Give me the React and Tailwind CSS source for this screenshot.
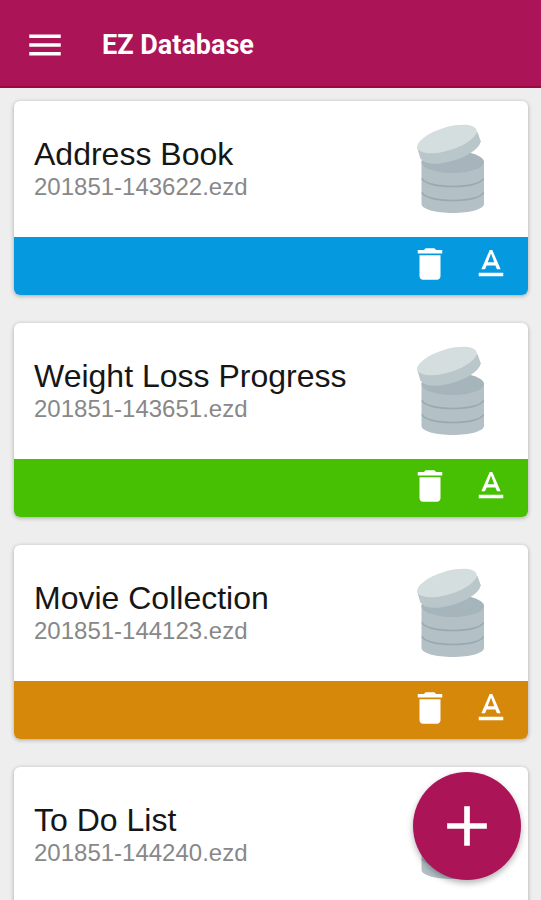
import React from 'react';
import { MdMenu, MdDelete, MdTextFormat, MdAdd } from 'react-icons/md';

const databases = [
  { name: 'Address Book', file: '201851-143622.ezd', color: 'bg-[#0599e0]' },
  { name: 'Weight Loss Progress', file: '201851-143651.ezd', color: 'bg-[#47c004]' },
  { name: 'Movie Collection', file: '201851-144123.ezd', color: 'bg-[#d6880a]' },
  { name: 'To Do List', file: '201851-144240.ezd', color: 'bg-[#8e24aa]' },
];

const DatabaseIcon = () => (
  <svg className="w-20 h-[100px] shrink-0 mt-0.5" viewBox="0 0 80 100" aria-hidden="true">
    {/* stack of discs */}
    <path d="M9.5 41v43c0 5 14 9 31.25 9S72 89 72 84V41z" fill="#b3c1c6" />
    <ellipse cx="40.75" cy="42" rx="31.25" ry="11" fill="#a5b5bb" />
    <path d="M10 58.500c2 5 15 8 30.750 8s28.750-3 30.750-8" fill="none" stroke="#98a9b1" strokeWidth="1.600" />
    <path d="M10 72.500c2 5 15 8 30.750 8s28.750-3 30.750-8" fill="none" stroke="#98a9b1" strokeWidth="1.600" />
    {/* tilted lid */}
    <ellipse cx="38.500" cy="29.500" rx="31" ry="11.500" transform="rotate(-17 38.500 29.500)" fill="#b9c6ca" />
    <path d="M5 27l3.500 12L69 22L65.500 12z" fill="#b9c6ca" />
    <ellipse cx="35" cy="19" rx="31" ry="11.500" transform="rotate(-17 35 19)" fill="#d5dedf" />
  </svg>
);

const DatabaseCard = ({ database }) => (
  <article className="rounded-md overflow-hidden bg-white shadow-[0_1px_4px_rgba(0,0,0,0.3)]">
    <div className="flex items-center justify-between h-[136px] pl-5 pr-9">
      <div>
        <h2 className="text-[32px] leading-[34px] mb-0.5 text-[#161616]">{database.name}</h2>
        <p className="text-2xl leading-7 text-[#888888]">{database.file}</p>
      </div>
      <DatabaseIcon />
    </div>
    <div className={`flex justify-end gap-[19px] h-[58px] pt-1.5 pr-4 text-white ${database.color}`}>
      <button className="h-[42px]" aria-label={`Delete ${database.name}`}>
        <MdDelete size={42} />
      </button>
      <button className="h-[42px]" aria-label={`Rename ${database.name}`}>
        <MdTextFormat size={42} />
      </button>
    </div>
  </article>
);

const App = () => (
  <div className="h-screen overflow-hidden flex flex-col bg-[#eeeeee] font-['Liberation_Sans',Arial,sans-serif]">
    <header className="flex items-center h-[88px] shrink-0 pt-1 pl-6 gap-9 bg-[#ab1457] border-b-2 border-[#a3073f] text-white">
      <button aria-label="Open menu">
        <MdMenu size={42} />
      </button>
      <h1 className="font-['Roboto',sans-serif] text-[27px] leading-8 font-bold">EZ Database</h1>
    </header>
    <main className="flex-1 overflow-hidden flex flex-col gap-7 pt-[13px] pl-[14px] pr-[13px]">
      {databases.map((database) => (
        <div key={database.file} className="shrink-0">
          <DatabaseCard database={database} />
        </div>
      ))}
    </main>
    <button
      className="fixed right-5 bottom-5 flex items-center justify-center size-[108px] rounded-full bg-[#ab1457] text-white shadow-[0_3px_6px_rgba(0,0,0,0.3)]"
      aria-label="Add database"
    >
      <MdAdd size={68} />
    </button>
  </div>
);

export default App;
